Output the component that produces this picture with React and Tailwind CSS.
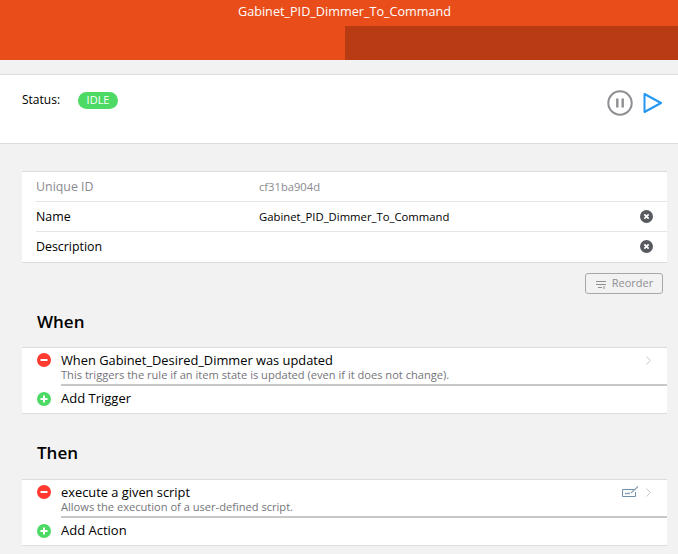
import { ChevronRight } from "lucide-react";

const font = { fontFamily: '"Open Sans", "Noto Sans", sans-serif' };

function ClearIcon() {
  return (
    <svg width="13" height="13" viewBox="0 0 13 13" className="shrink-0">
      <circle cx="6.5" cy="6.5" r="6.5" fill="#565a5e" />
      <path d="M4.3 4.3l4.4 4.4M8.7 4.3l-4.4 4.4" stroke="#fff" strokeWidth="1.7" />
    </svg>
  );
}

function RoundIcon({ color, plus }) {
  return (
    <svg width="14" height="14" viewBox="0 0 14 14" className="shrink-0">
      <circle cx="7" cy="7" r="7" fill={color} />
      <path d={plus ? "M3.5 7h7M7 3.5v7" : "M3.5 7h7"} stroke="#fff" strokeWidth="2" />
    </svg>
  );
}

function InfoRow({ label, value, muted, clear, last }) {
  return (
    <div className={`flex h-[30px] items-center border-b pr-[14px] ${last ? "border-transparent" : "border-[#e5e5e5]"}`}>
      <span className={`w-[223px] pt-[1px] text-[12.4px] ${muted ? "text-[#8a8a8f]" : "text-black"}`}>{label}</span>
      <span className={`flex-1 ${muted ? "pt-[1px] text-[11.2px] text-[#8a8a8f]" : "pt-[2px] text-[11.3px] text-black"}`}>{value}</span>
      {clear ? <ClearIcon /> : null}
    </div>
  );
}

function RuleList({ title, subtitle, addLabel, editIcon }) {
  return (
    <div className="mr-[11px] border-y border-[#dcdcdc] bg-white">
      <div className="flex h-[36px] items-start pl-[15px] pr-[11px]">
        <div className="mt-[5px]">
          <RoundIcon color="#ff3b30" />
        </div>
        <div className="ml-[10px] flex-1">
          <div className="mt-[5px] text-[12.85px] leading-[15px] font-medium text-black">{title}</div>
          <div className="text-[11.1px] leading-[13px] text-[#74747a]">{subtitle}</div>
        </div>
        {editIcon ? (
          <svg width="17" height="11" viewBox="0 0 17 11" fill="none" className="mt-[6px] mr-[2px]">
            <path d="M13 3.5H.5v7h13V6" stroke="#6f8fae" />
            <path d="M3 7.5h5" stroke="#8aa3bb" strokeWidth="1.5" />
            <path d="M9 7l7-6.5" stroke="#8aa3bb" strokeWidth="1.2" />
          </svg>
        ) : null}
        <ChevronRight size={15} strokeWidth={1.6} className="mt-[5px] text-[#c7c7cc]" />
      </div>
      <div className="ml-[39px] h-[2px] bg-[#c8c8c8]" />
      <div className="flex h-[27px] items-center pb-[1px] pl-[15px]">
        <RoundIcon color="#4cd964" plus />
        <span className="ml-[10px] text-[13px] text-black">{addLabel}</span>
      </div>
    </div>
  );
}

export default function App() {
  return (
    <div className="h-[554px] w-[678px] overflow-hidden bg-[#f2f2f2]" style={font}>
      <header className="h-[60px] bg-[#e94e1a]">
        <div className="flex h-[26px] items-start justify-center pt-[3px] pl-[11px] text-[12.65px] leading-[16px] text-white">
          Gabinet_PID_Dimmer_To_Command
        </div>
        <div className="ml-[345px] h-[34px] bg-[#b93b13]" />
      </header>

      <section className="mt-[14px] flex h-[70px] items-start border-y border-[#dcdcdc] bg-white pl-[22px] pr-[15px]">
        <span className="mt-[16px] text-[12px] leading-[18px] text-black">Status:</span>
        <span className="mt-[17px] ml-[18px] flex h-[17px] w-[40px] items-center justify-center rounded-full bg-[#4cd964] text-[11px] text-white">
          IDLE
        </span>
        <div className="ml-auto mt-[15px] flex items-center gap-[10px]">
          <svg width="26" height="26" viewBox="0 0 26 26" fill="none">
            <circle cx="13" cy="13" r="11.7" stroke="#8e8e93" strokeWidth="2" />
            <path d="M10.3 8.5v9M15.7 8.5v9" stroke="#8e8e93" strokeWidth="2.4" />
          </svg>
          <svg width="20" height="22" viewBox="0 0 20 22" fill="none">
            <path d="M1.5 2v18L18 11z" stroke="#2196f3" strokeWidth="2" strokeLinejoin="round" />
          </svg>
        </div>
      </section>

      <section className="mt-[27px] ml-[22px]">
        <div className="mr-[11px] border-t border-b border-[#dcdcdc] bg-white pl-[14px]">
          <InfoRow label="Unique ID" value="cf31ba904d" muted />
          <InfoRow label="Name" value="Gabinet_PID_Dimmer_To_Command" clear />
          <InfoRow label="Description" clear last />
        </div>

        <div className="mt-[10px] mr-[15px] flex justify-end">
          <button
            type="button"
            className="flex h-[21px] w-[78px] items-center justify-center gap-[6px] rounded-[3px] border border-[#a8a8a8] pl-[1px] text-[11px] text-[#8e8e93]"
          >
            <svg width="10" height="8" viewBox="0 0 10 8" fill="none" stroke="#8e8e93" className="mt-[3px]">
              <path d="M0 .5h10M0 3.5h10M2 6.5h4M8 5v3" />
            </svg>
            Reorder
          </button>
        </div>

        <h2 className="mt-[16px] ml-[15px] text-[17px] leading-[24px] font-semibold text-black">When</h2>
        <div className="mt-[13px]">
          <RuleList
            title="When Gabinet_Desired_Dimmer was updated"
            subtitle="This triggers the rule if an item state is updated (even if it does not change)."
            addLabel="Add Trigger"
          />
        </div>

        <h2 className="mt-[27px] ml-[15px] text-[17px] leading-[24px] font-semibold text-black">Then</h2>
        <div className="mt-[14px]">
          <RuleList
            title="execute a given script"
            subtitle="Allows the execution of a user-defined script."
            addLabel="Add Action"
            editIcon
          />
        </div>
      </section>
    </div>
  );
}
